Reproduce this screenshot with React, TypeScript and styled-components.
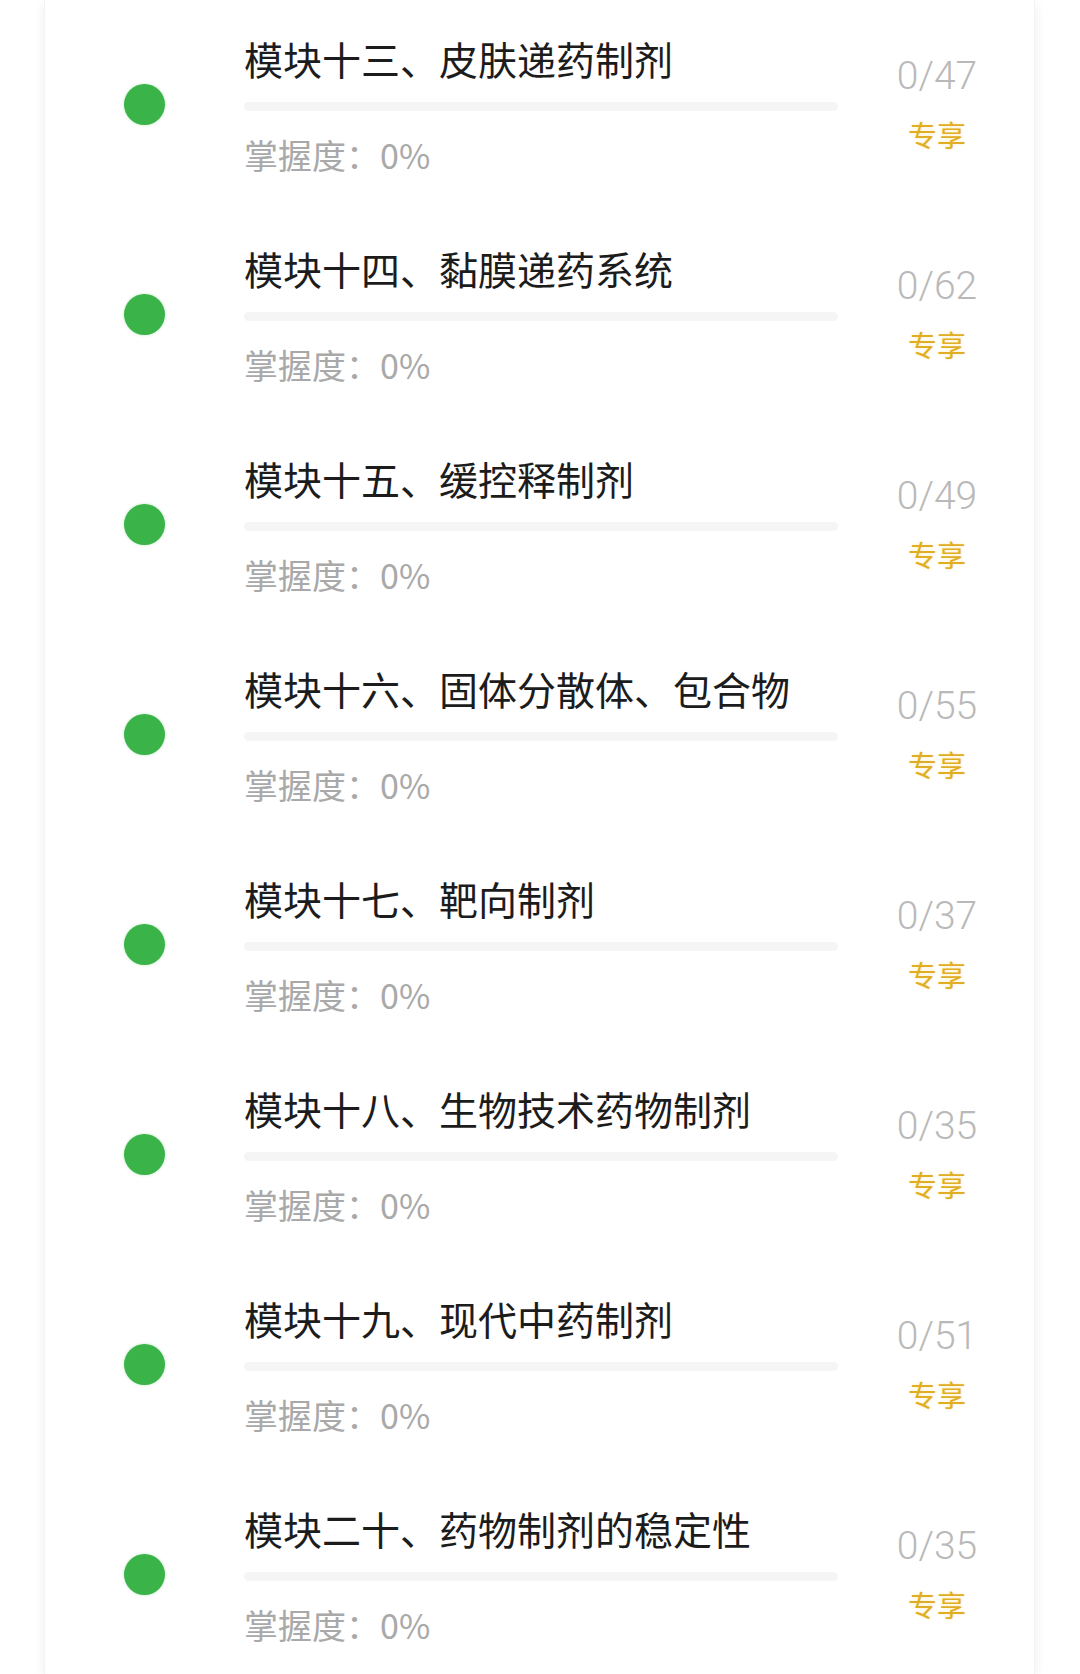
import styled, { createGlobalStyle } from 'styled-components';

interface Module {
  title: string;
  done: number;
  total: number;
  mastery: number;
}

const modules: Module[] = [
  { title: '模块十三、皮肤递药制剂', done: 0, total: 47, mastery: 0 },
  { title: '模块十四、黏膜递药系统', done: 0, total: 62, mastery: 0 },
  { title: '模块十五、缓控释制剂', done: 0, total: 49, mastery: 0 },
  { title: '模块十六、固体分散体、包合物', done: 0, total: 55, mastery: 0 },
  { title: '模块十七、靶向制剂', done: 0, total: 37, mastery: 0 },
  { title: '模块十八、生物技术药物制剂', done: 0, total: 35, mastery: 0 },
  { title: '模块十九、现代中药制剂', done: 0, total: 51, mastery: 0 },
  { title: '模块二十、药物制剂的稳定性', done: 0, total: 35, mastery: 0 },
];

const GlobalStyle = createGlobalStyle`
  html, body {
    margin: 0;
    padding: 0;
    background: #ffffff;
  }
  body {
    font-family: "Noto Sans CJK SC", "Noto Sans", sans-serif;
  }
`;

const Page = styled.div`
  width: 1080px;
  height: 1674px;
  overflow: hidden;
  padding: 0 45px 0 44px;
  box-sizing: border-box;
`;

const Card = styled.div`
  background: #ffffff;
  box-shadow: -6px 0 10px -4px rgba(0, 0, 0, 0.05), 6px 0 10px -4px rgba(0, 0, 0, 0.05);
  border-left: 1px solid #f3f3f3;
  border-right: 1px solid #f3f3f3;
`;

const Row = styled.div`
  height: 210px;
  display: flex;
  align-items: flex-start;
  padding-left: 79px;
`;

const Dot = styled.span`
  flex: none;
  width: 41px;
  height: 41px;
  margin: 84px 79px 0 0;
  border-radius: 50%;
  background: #3ab449;
  box-shadow: 0 0 3px rgba(58, 180, 73, 0.35);
`;

const Content = styled.div`
  flex: none;
  width: 594px;
  display: flex;
  flex-direction: column;
  padding-top: 39px;
`;

const Title = styled.div`
  font-size: 39px;
  line-height: 39px;
  color: #1c1c1c;
  white-space: nowrap;
`;

const Track = styled.div`
  margin-top: 24px;
  height: 9px;
  border-radius: 5px;
  background: #f5f5f5;
  overflow: hidden;
`;

const Fill = styled.div`
  height: 100%;
  background: #3ab449;
`;

const Mastery = styled.div`
  margin-top: 27px;
  font-size: 34px;
  line-height: 34px;
  color: #a9a9a9;
`;

const Side = styled.div`
  flex: none;
  width: 120px;
  margin-left: 39px;
  display: flex;
  flex-direction: column;
  align-items: center;
  padding-top: 57px;
`;

const Count = styled.div`
  font-family: Roboto, "Noto Sans", sans-serif;
  font-weight: 300;
  font-size: 39px;
  line-height: 39px;
  color: #b9b9b9;
  white-space: nowrap;
`;

const Badge = styled.div`
  margin-top: 24px;
  font-size: 29px;
  line-height: 29px;
  color: #e0ae24;
  white-space: nowrap;
  text-shadow: 0 0 3px rgba(250, 215, 90, 0.45);
`;

export default function App() {
  return (
    <>
      <GlobalStyle />
      <Page>
        <Card>
          {modules.map((m) => (
            <Row key={m.title}>
              <Dot />
              <Content>
                <Title>{m.title}</Title>
                <Track>
                  <Fill style={{ width: `${m.mastery}%` }} />
                </Track>
                <Mastery>掌握度：{m.mastery}%</Mastery>
              </Content>
              <Side>
                <Count>
                  {m.done}/{m.total}
                </Count>
                <Badge>专享</Badge>
              </Side>
            </Row>
          ))}
        </Card>
      </Page>
    </>
  );
}
